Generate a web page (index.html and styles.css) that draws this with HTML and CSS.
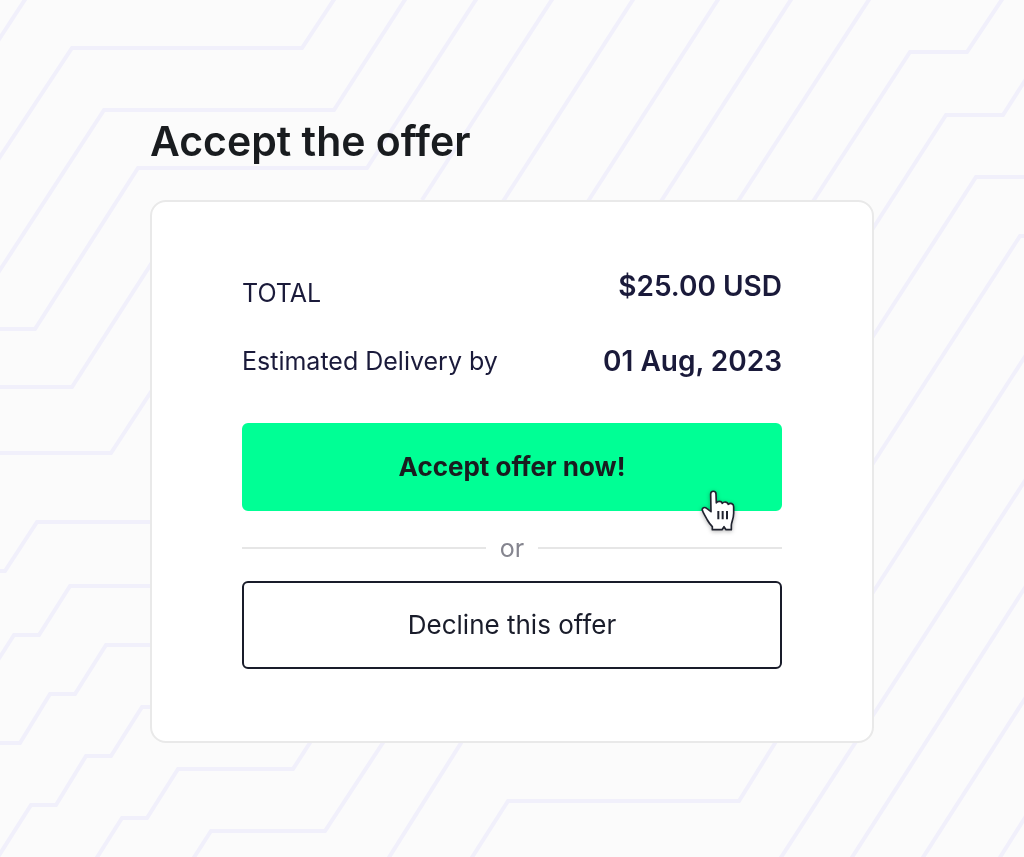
FILE: index.html
```html
<!DOCTYPE html>
<html lang="en">
<head>
  <meta charset="utf-8">
  <meta name="viewport" content="width=device-width, initial-scale=1">
  <title>Accept the offer</title>
  <link rel="stylesheet" href="styles.css">
</head>
<body>
  <svg class="backdrop" viewBox="0 0 1024 857" preserveAspectRatio="xMidYMid slice" aria-hidden="true">
    <path d="M26-2L-2 41M335-2L302 48H72L-2 160M406-2L334 110H104L-2 273M477-2L367 168H138L35 329H-2M553-2L422 200M160 250L72 387H-2M160 378L111 453H-2M160 522H37L5 571H-2M160 586H70L39 635H14L-2 660M160 645H106L75 694H50L20 743H-2M160 707H142L111 756H86L56 805H31L-2 857M315 735L293 769H178L147 818H122L96 859M388 735L325 831H211L193 859M466 735L388 859M780 735L739 801H508L471 859"/>
    <path d="M634-2L500 206M719-2L585 206M792-2L658 206M870-2L735 206M1003-2L967 52H910L810 206M1026 79L1003 115H946L870 233M1026 177H976L870 341M1026 236H1020L870 468M1026 355L870 597M1026 479L780 859M1026 586L851 859M1026 697L922 859M1026 816L999 859"/>
  </svg>

  <main class="page">
    <h1 class="title">Accept the offer</h1>
    <section class="card" aria-label="Offer summary">
      <dl class="summary">
        <div class="row row-total">
          <dt class="label">TOTAL</dt>
          <dd class="value">$25.00 USD</dd>
        </div>
        <div class="row">
          <dt class="label">Estimated Delivery by</dt>
          <dd class="value">01 Aug, 2023</dd>
        </div>
      </dl>
      <div class="accept">
        <button class="button button-primary" type="button">Accept offer now!</button>
        <svg class="pointer" viewBox="60 30 108 126" aria-hidden="true">
          <path d="M97 152V143C90 136 86 130 82 123C76 111 69 101 67 94C65 86 74 83 80 88L93 98L92 45C92 34 108 34 108 45L109 72C112 66 124 65 127 73C132 67 142 68 145 76C151 70 161 74 161 83V103C161 120 154 128 154 139V152H138L132 143L126 152Z"/>
          <path class="knuckles" d="M115 96V121M128 96V121M141 96V121"/>
        </svg>
      </div>
      <div class="divider">or</div>
      <button class="button button-outline" type="button">Decline this offer</button>
    </section>
  </main>
</body>
</html>
```
FILE: styles.css
```css
* {
  box-sizing: border-box;
}

body {
  margin: 0;
  min-height: 100vh;
  background: #fbfbfb;
  color: #1a1a3a;
  font-family: Inter, "Liberation Sans", sans-serif;
  font-variant-ligatures: none;
  font-feature-settings: "calt" 0;
}

.backdrop {
  position: fixed;
  inset: 0;
  z-index: -1;
  width: 100%;
  height: 100%;
  fill: none;
  stroke: #f1f0fb;
  stroke-width: 4;
}

.page {
  max-width: 724px;
  margin: 0 auto;
  padding: 116px 0 64px;
}

.title {
  margin: 0 0 34px;
  color: #191c1f;
  font-size: 41px;
  font-weight: 600;
  line-height: 50px;
}

.card {
  padding: 64px 90px 72px;
  border: 2px solid #e9e9e9;
  border-radius: 16px;
  background: #fff;
}

.summary {
  display: grid;
  gap: 29px;
  margin: 0 0 42px;
}

.row {
  display: flex;
  align-items: center;
  justify-content: space-between;
}

.row-total {
  align-items: flex-start;
}

.row-total .label {
  padding-top: 8px;
}

.label {
  font-size: 25px;
  line-height: 38px;
}

.value {
  margin: 0;
  font-size: 28px;
  font-weight: 600;
  line-height: 40px;
}

.accept {
  position: relative;
}

.button {
  display: block;
  width: 100%;
  padding: 24px;
  border: 2px solid transparent;
  border-radius: 6px;
  font-family: inherit;
  font-size: 26px;
  font-variant-ligatures: inherit;
  font-feature-settings: inherit;
  line-height: 36px;
  color: #191c2a;
  cursor: pointer;
}

.button-primary {
  border-color: #00ff95;
  background: #00ff95;
  color: #191c1f;
  font-weight: 700;
}

.button-outline {
  background: #fff;
  border-color: #191c2a;
}

.pointer {
  position: absolute;
  right: 46px;
  bottom: -20px;
  width: 36px;
  height: 42px;
  fill: #fff;
  stroke: #20232f;
  stroke-width: 5;
  stroke-linejoin: round;
  filter: drop-shadow(0 1px 2px rgb(0 0 0 / 30%));
  pointer-events: none;
}

.knuckles {
  stroke-width: 6;
}

.divider {
  display: flex;
  align-items: center;
  gap: 14px;
  padding: 20px 0 16px;
  color: #85858f;
  font-size: 25px;
  line-height: 34px;
}

.divider::before,
.divider::after {
  content: "";
  flex: 1;
  height: 2px;
  background: #e6e6e6;
}
```
